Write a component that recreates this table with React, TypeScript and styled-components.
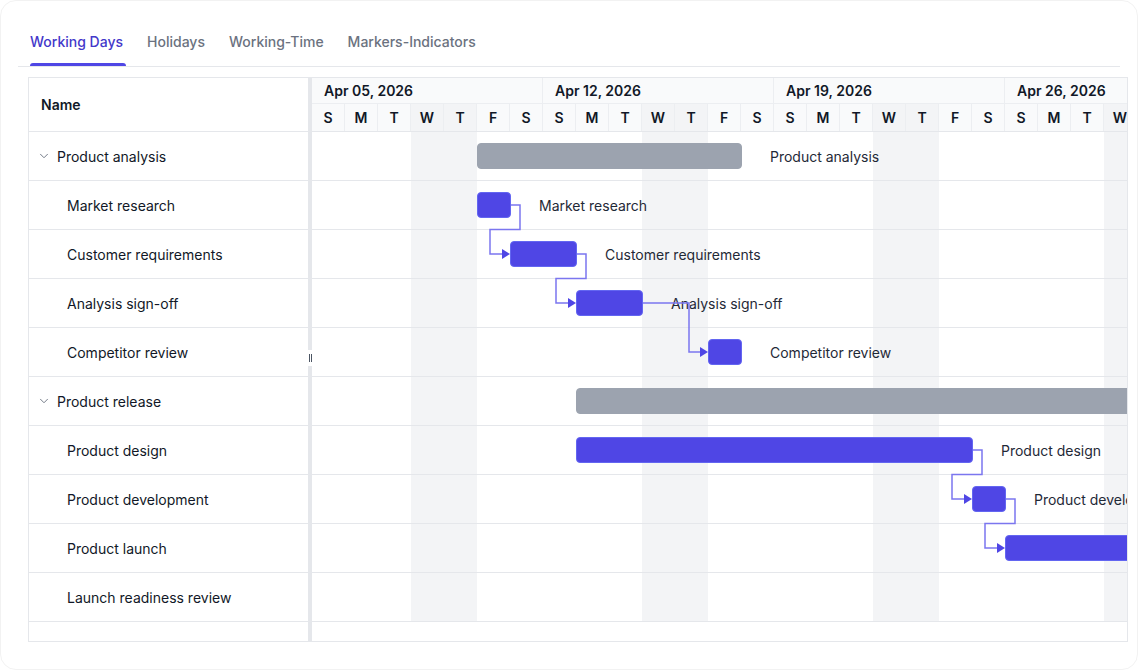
import React from 'react';
import styled, { createGlobalStyle } from 'styled-components';
import { ChevronDown } from 'lucide-react';

const DAY_W = 33;
const ROW_H = 49;
const DAYS = ['S', 'M', 'T', 'W', 'T', 'F', 'S'];
const WEEKS = ['Apr 05, 2026', 'Apr 12, 2026', 'Apr 19, 2026', 'Apr 26, 2026'];
const DAY_COUNT = 28;
// non-working days in this demo are Wednesday and Thursday
const isOffDay = (i: number) => i % 7 === 3 || i % 7 === 4;

type Task = {
  id: string;
  name: string;
  start: number;
  duration: number;
  summary?: boolean;
  child?: boolean;
};

const tasks: Task[] = [
  { id: 'pa', name: 'Product analysis', start: 5, duration: 8, summary: true },
  { id: 'mr', name: 'Market research', start: 5, duration: 1, child: true },
  { id: 'cr', name: 'Customer requirements', start: 6, duration: 2, child: true },
  { id: 'as', name: 'Analysis sign-off', start: 8, duration: 2, child: true },
  { id: 'cv', name: 'Competitor review', start: 12, duration: 1, child: true },
  { id: 'pr', name: 'Product release', start: 8, duration: 22, summary: true },
  { id: 'pd', name: 'Product design', start: 8, duration: 12, child: true },
  { id: 'pv', name: 'Product development', start: 20, duration: 1, child: true },
  { id: 'pl', name: 'Product launch', start: 21, duration: 6, child: true },
  { id: 'lr', name: 'Launch readiness review', start: 28, duration: 1, child: true },
];

const links: [string, string][] = [
  ['mr', 'cr'],
  ['cr', 'as'],
  ['as', 'cv'],
  ['pd', 'pv'],
  ['pv', 'pl'],
];

const GlobalStyle = createGlobalStyle`
  html, body {
    margin: 0;
    padding: 0;
    background: #ffffff;
  }
  body {
    font-family: Inter, "Noto Sans", "Liberation Sans", sans-serif;
    color: #111827;
  }
  * {
    box-sizing: border-box;
  }
`;

const Card = styled.div`
  width: 1138px;
  height: 670px;
  border: 1px solid #f2f2f2;
  border-radius: 16px;
  background: #ffffff;
  overflow: hidden;
`;

const TabBar = styled.div`
  display: flex;
  gap: 24px;
  margin: 19px 17px 0 17px;
  padding-left: 12px;
  border-bottom: 1px solid #e5e7eb;
`;

const Tab = styled.div<{ $active?: boolean }>`
  position: relative;
  height: 46px;
  padding-bottom: 3px;
  display: flex;
  align-items: center;
  font-size: 14px;
  font-weight: 500;
  color: ${(p) => (p.$active ? '#4338ca' : '#6b7280')};

  &::after {
    content: '';
    position: absolute;
    left: 0;
    right: -3px;
    bottom: 0;
    height: 3px;
    border-radius: 3px 3px 0 0;
    background: ${(p) => (p.$active ? '#4f46e5' : 'transparent')};
  }
`;

const GanttBox = styled.div`
  display: grid;
  grid-template-columns: 279px 4px 1fr;
  height: 565px;
  margin: 10px 0 0 27px;
  width: 1100px;
  border: 1px solid #e5e7eb;
`;

const TreePanel = styled.div`
  display: flex;
  flex-direction: column;
`;

const TreeHeader = styled.div`
  height: 54px;
  display: flex;
  align-items: center;
  padding-left: 12px;
  font-size: 14px;
  font-weight: 600;
  border-bottom: 1px solid #e5e7eb;
`;

const TreeRow = styled.div<{ $child?: boolean }>`
  height: ${ROW_H}px;
  display: flex;
  align-items: center;
  gap: 6px;
  padding-left: ${(p) => (p.$child ? '38px' : '8px')};
  font-size: 14px;
  color: #111827;
  border-bottom: 1px solid #e5e7eb;

  svg {
    color: #6b7280;
    flex-shrink: 0;
  }
`;

const Splitter = styled.div`
  position: relative;
  background: #e5e7eb;
`;

const Grip = styled.div`
  position: absolute;
  left: 0;
  right: 0;
  top: 272px;
  height: 16px;
  background: #ffffff;
  display: flex;
  justify-content: center;
  align-items: center;
  gap: 1px;

  span {
    width: 1px;
    height: 8px;
    background: #4b5563;
  }
`;

const ChartPanel = styled.div`
  overflow: hidden;
  display: flex;
  flex-direction: column;
`;

const WeekRow = styled.div`
  display: flex;
  height: 26px;
  background: #f9fafb;
  border-bottom: 1px solid #eceef1;
`;

const WeekCell = styled.div`
  flex: 0 0 ${DAY_W * 7}px;
  padding-left: 12px;
  display: flex;
  align-items: center;
  font-size: 14px;
  font-weight: 600;
  border-right: 1px solid #eceef1;
`;

const DayRow = styled.div`
  display: flex;
  height: 28px;
  background: #f9fafb;
  border-bottom: 1px solid #e5e7eb;
`;

const DayCell = styled.div<{ $off?: boolean }>`
  flex: 0 0 ${DAY_W}px;
  display: flex;
  align-items: center;
  justify-content: center;
  font-size: 14px;
  font-weight: 600;
  background: ${(p) => (p.$off ? '#f3f4f6' : 'transparent')};
  border-right: 1px solid #eceef1;
`;

const ChartBody = styled.div`
  position: relative;
`;

const ShadeLayer = styled.div`
  position: absolute;
  inset: 0;
  display: flex;
`;

const ShadeColumn = styled.div<{ $off?: boolean }>`
  flex: 0 0 ${DAY_W}px;
  background: ${(p) => (p.$off ? '#f3f4f6' : 'transparent')};
`;

const ChartRow = styled.div`
  position: relative;
  height: ${ROW_H}px;
  border-bottom: 1px solid #e5e7eb;
`;

const Bar = styled.div<{ $summary?: boolean }>`
  position: absolute;
  top: 11px;
  height: 26px;
  border-radius: 4px;
  background: ${(p) => (p.$summary ? '#9ca3af' : '#4f46e5')};
  border: 1px solid ${(p) => (p.$summary ? '#9ca3af' : '#6366f1')};
`;

const BarLabel = styled.div`
  position: absolute;
  top: 0;
  height: 48px;
  display: flex;
  align-items: center;
  white-space: nowrap;
  font-size: 14px;
  color: #1f2937;
`;

const Links = styled.svg`
  position: absolute;
  left: 0;
  top: 0;
  overflow: visible;
  pointer-events: none;
`;

const barLeft = (t: Task) => t.start * DAY_W;
const barRight = (t: Task) => (t.start + t.duration) * DAY_W + 1;

function linkPath(fromIdx: number, toIdx: number) {
  const a = tasks[fromIdx];
  const b = tasks[toIdx];
  const sx = barRight(a);
  const sy = fromIdx * ROW_H + 24;
  const tx = barLeft(b);
  const ty = toIdx * ROW_H + 24;
  if (tx >= sx + 20) {
    return `M${sx},${sy} H${tx - 19} V${ty} H${tx - 7}`;
  }
  const drop = (fromIdx + 1) * ROW_H - 0.5;
  return `M${sx},${sy} H${sx + 9} V${drop} H${tx - 20} V${ty} H${tx - 7}`;
}

function Connectors() {
  const index = (id: string) => tasks.findIndex((t) => t.id === id);
  return (
    <Links width={DAY_W * DAY_COUNT} height={tasks.length * ROW_H}>
      {links.map(([from, to]) => {
        const f = index(from);
        const t = index(to);
        const tx = barLeft(tasks[t]);
        const ty = t * ROW_H + 24;
        return (
          <g key={from + to}>
            <path d={linkPath(f, t)} fill="none" stroke="#7b76ef" strokeWidth={1.5} />
            <polygon
              points={`${tx - 8},${ty - 5} ${tx},${ty} ${tx - 8},${ty + 5}`}
              fill="#4f46e5"
            />
          </g>
        );
      })}
    </Links>
  );
}

export default function App() {
  const days = Array.from({ length: DAY_COUNT }, (_, i) => i);
  return (
    <>
      <GlobalStyle />
      <Card>
        <TabBar>
          <Tab $active>Working Days</Tab>
          <Tab>Holidays</Tab>
          <Tab>Working-Time</Tab>
          <Tab>Markers-Indicators</Tab>
        </TabBar>

        <GanttBox>
          <TreePanel>
            <TreeHeader>Name</TreeHeader>
            {tasks.map((t) => (
              <TreeRow key={t.id} $child={t.child}>
                {!t.child && <ChevronDown size={14} strokeWidth={1.6} />}
                {t.name}
              </TreeRow>
            ))}
          </TreePanel>

          <Splitter>
            <Grip>
              <span />
              <span />
            </Grip>
          </Splitter>

          <ChartPanel>
            <WeekRow>
              {WEEKS.map((w) => (
                <WeekCell key={w}>{w}</WeekCell>
              ))}
            </WeekRow>
            <DayRow>
              {days.map((i) => (
                <DayCell key={i} $off={isOffDay(i)}>
                  {DAYS[i % 7]}
                </DayCell>
              ))}
            </DayRow>
            <ChartBody>
              <ShadeLayer>
                {days.map((i) => (
                  <ShadeColumn key={i} $off={isOffDay(i)} />
                ))}
              </ShadeLayer>
              {tasks.map((t) => (
                <ChartRow key={t.id}>
                  <Bar
                    $summary={t.summary}
                    style={{ left: barLeft(t), width: barRight(t) - barLeft(t) }}
                  />
                  <BarLabel style={{ left: barRight(t) + 28 }}>{t.name}</BarLabel>
                </ChartRow>
              ))}
              <Connectors />
            </ChartBody>
          </ChartPanel>
        </GanttBox>
      </Card>
    </>
  );
}
